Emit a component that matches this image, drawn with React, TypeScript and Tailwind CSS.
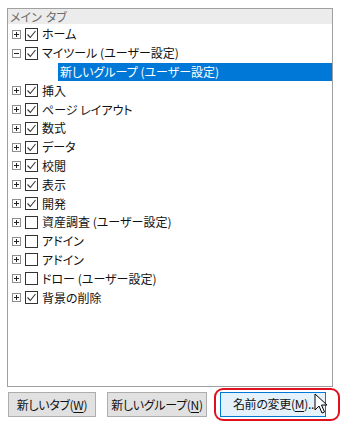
import type { ReactNode } from "react";

type Item = { label: string; checked: boolean; open?: boolean; child?: string };

const items: Item[] = [
  { label: "ホーム", checked: true },
  { label: "マイツール (ユーザー設定)", checked: true, open: true, child: "新しいグループ (ユーザー設定)" },
  { label: "挿入", checked: true },
  { label: "ページ レイアウト", checked: true },
  { label: "数式", checked: true },
  { label: "データ", checked: true },
  { label: "校閲", checked: true },
  { label: "表示", checked: true },
  { label: "開発", checked: true },
  { label: "資産調査 (ユーザー設定)", checked: false },
  { label: "アドイン", checked: false },
  { label: "アドイン", checked: false },
  { label: "ドロー (ユーザー設定)", checked: false },
  { label: "背景の削除", checked: true },
];

function Expander({ open }: { open?: boolean }) {
  return (
    <svg width="9" height="9" viewBox="0 0 9 9" className="shrink-0">
      <rect x="0.5" y="0.5" width="8" height="8" fill="#fff" stroke="#8e8e8e" />
      <path d="M2 4.5h5" stroke="#222" />
      {!open && <path d="M4.5 2v5" stroke="#222" />}
    </svg>
  );
}

function Check({ checked }: { checked: boolean }) {
  return (
    <svg width="13" height="13" viewBox="0 0 13 13" className="shrink-0">
      <rect x="0.5" y="0.5" width="12" height="12" fill="#fff" stroke="#333" />
      {checked && <path d="M2.5 6.5l2.8 3L10.5 3" fill="none" stroke="#333" strokeWidth="1.1" />}
    </svg>
  );
}

function Row({ children }: { children: ReactNode }) {
  return <div className="flex h-[18.8px] items-center">{children}</div>;
}

function Btn({ children, hot }: { children: ReactNode; hot?: boolean }) {
  return (
    <div
      className={
        hot
          ? "flex h-[25px] items-center justify-center border border-[#0078d7] bg-[#e5f1fb] tracking-[-0.3px]"
          : "flex h-[25px] items-center justify-center border border-[#adadad] bg-[#e1e1e1] tracking-[-0.3px]"
      }
    >
      {children}
    </div>
  );
}

export default function App() {
  return (
    <div className="relative h-[423px] w-[341px] overflow-hidden bg-white text-[12px] text-[#111] [font-family:'Noto_Sans_CJK_JP','Noto_Sans',sans-serif] [font-feature-settings:'palt']">
      {/* tree panel */}
      <div className="absolute left-[7px] top-[8px] h-[379px] w-[326px] border border-[#a0a0a0]">
        <div className="flex h-[15px] items-center bg-[#ececec] pl-[2px] leading-none text-[#6d6d6d]">
          メイン<span className="ml-[4px]">タブ</span>
        </div>
        <div className="pt-[1px]">
          {items.map((it, i) => (
            <div key={i}>
              <Row>
                <div className="ml-[4px] flex items-center">
                  <Expander open={it.open} />
                </div>
                <div className="ml-[4px] flex items-center">
                  <Check checked={it.checked} />
                </div>
                <span className="ml-[4px] whitespace-nowrap leading-none">{it.label}</span>
              </Row>
              {it.child && (
                <Row>
                  <div className="ml-[50px] flex h-[18px] flex-1 items-center bg-[#0078d7] pl-[2px] leading-none text-white">
                    {it.child}
                  </div>
                </Row>
              )}
            </div>
          ))}
        </div>
      </div>

      {/* buttons */}
      <div className="absolute left-[8px] top-[392px] flex gap-[11px]">
        <div className="w-[88px]">
          <Btn>
            新しいタブ(<span className="underline underline-offset-2">W</span>)
          </Btn>
        </div>
        <div className="w-[100px]">
          <Btn>
            新しいグループ(<span className="underline underline-offset-2">N</span>)
          </Btn>
        </div>
      </div>
      <div className="absolute left-[214px] top-[388px] h-[33px] w-[126px] rounded-[9px] border-[2.5px] border-[#e0101e] p-[1.5px] pl-[4px] pr-[12px]">
        <Btn hot>
          <span className="whitespace-nowrap pl-[4px]">
            名前の変更(<span className="underline underline-offset-2">M</span>)...
          </span>
        </Btn>
      </div>

      {/* mouse cursor */}
      <svg className="absolute left-[314px] top-[393px]" width="14" height="22" viewBox="0 0 14 22">
        <path d="M1 1v16l4-4 3 7 2.5-1-3-7h5.5z" fill="#fff" stroke="#000" strokeWidth="1" strokeLinejoin="round" />
      </svg>
    </div>
  );
}
